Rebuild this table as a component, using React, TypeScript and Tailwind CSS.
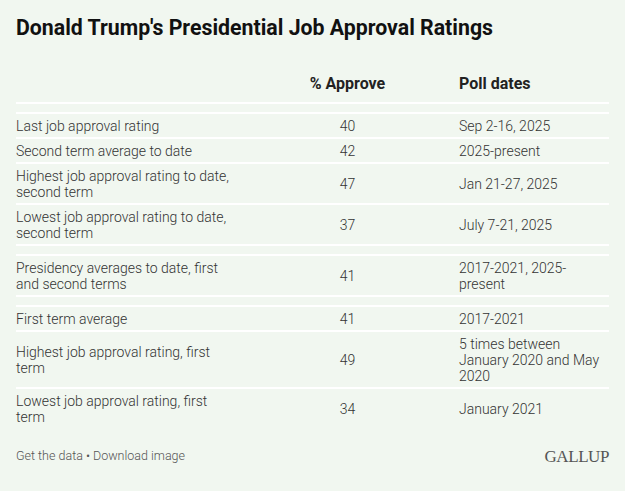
type Row =
  | { spacer: true }
  | { spacer?: false; label: string; value: string; dates: string };

const rows: Row[] = [
  { spacer: true },
  { label: "Last job approval rating", value: "40", dates: "Sep 2-16, 2025" },
  { label: "Second term average to date", value: "42", dates: "2025-present" },
  { label: "Highest job approval rating to date, second term", value: "47", dates: "Jan 21-27, 2025" },
  { label: "Lowest job approval rating to date, second term", value: "37", dates: "July 7-21, 2025" },
  { spacer: true },
  { label: "Presidency averages to date, first and second terms", value: "41", dates: "2017-2021, 2025-present" },
  { spacer: true },
  { label: "First term average", value: "41", dates: "2017-2021" },
  { label: "Highest job approval rating, first term", value: "49", dates: "5 times between January 2020 and May 2020" },
  { label: "Lowest job approval rating, first term", value: "34", dates: "January 2021" },
];

export default function App() {
  return (
    <div
      className="min-h-screen w-full bg-[#f1f7f0] px-4 pt-[16px] text-[#333]"
      style={{ fontFamily: "Roboto, 'Liberation Sans', sans-serif" }}
    >
      <h1 className="text-[21.3px] leading-6 font-bold text-[#111]">
        Donald Trump's Presidential Job Approval Ratings
      </h1>

      <div className="mt-[34px]">
        <div className="flex items-end border-b-2 border-white pb-[8px] text-[16px] leading-5 font-bold text-[#222]">
          <div className="w-[220px] shrink-0" />
          <div className="flex-1 text-center">% Approve</div>
          <div className="w-[150px] shrink-0">Poll dates</div>
        </div>

        {rows.map((row, i) =>
          row.spacer ? (
            <div key={i} className="h-[10px] border-b-2 border-white" />
          ) : (
            <div
              key={i}
              className={`flex items-center py-[3.5px] text-[14px] leading-4 font-light ${
                i === rows.length - 1 ? "" : "border-b-2 border-white"
              }`}
            >
              <div className="w-[220px] shrink-0">{row.label}</div>
              <div className="flex-1 text-center">{row.value}</div>
              <div className="w-[150px] shrink-0">{row.dates}</div>
            </div>
          )
        )}
      </div>

      <div className="mt-[16px] flex items-center justify-between">
        <div className="text-[12.5px] font-light text-[#555]">
          Get the data • Download image
        </div>
        <div
          className="text-[17px] tracking-tight text-[#555]"
          style={{ fontFamily: "'Liberation Serif', serif" }}
        >
          GALLUP
        </div>
      </div>
    </div>
  );
}
